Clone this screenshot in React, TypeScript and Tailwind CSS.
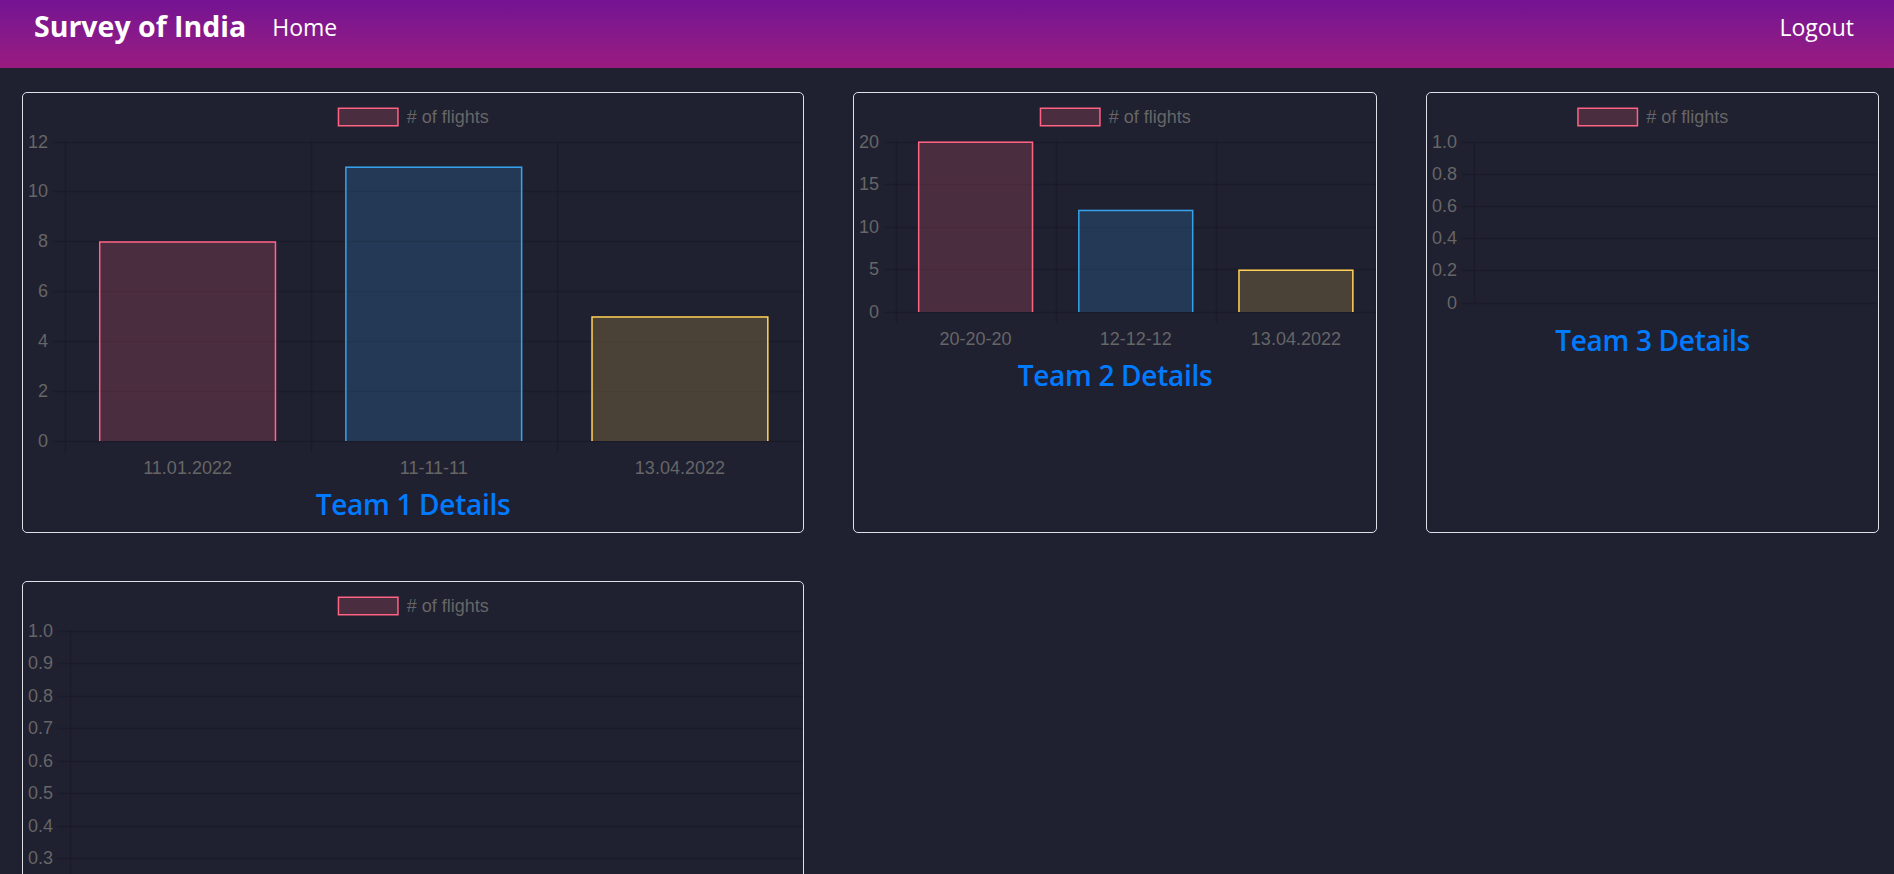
import React from "react";

type ChartProps = {
  w: number;
  yLabels: string[];
  max: number;
  values: number[];
  labels: string[];
  labelRight: number;
};

const FILLS = ["rgba(255,99,132,0.2)", "rgba(54,162,235,0.2)", "rgba(255,206,86,0.2)"];
const STROKES = ["rgb(255,99,132)", "rgb(54,162,235)", "rgb(255,206,86)"];
const GRID = "rgba(0,0,0,0.13)";
const FONT = "'Liberation Sans', Arial, sans-serif";

function BarChart({ w, yLabels, max, values, labels, labelRight }: ChartProps) {
  const h = w / 2;
  const plotTop = 48.5;
  const plotBottom = labels.length ? h - 42 : h - 16;
  const plotLeft = labelRight + 16.5;
  const plotRight = w;
  const n = labels.length;
  const cat = n ? (plotRight - plotLeft) / n : 0;
  const barW = cat * 0.72;
  const steps = yLabels.length - 1;
  const legendX = w / 2 - 75.3;

  return (
    <svg width={w} height={h} className="block" style={{ fontFamily: FONT }}>
      {/* legend */}
      <rect x={legendX + 0.75} y={15.25} width={59.5} height={17.5} fill={FILLS[0]} stroke={STROKES[0]} strokeWidth={1.5} />
      <text x={legendX + 69} y={23.5} fontSize={18} fill="#666" dominantBaseline="central">
        # of flights
      </text>

      {/* horizontal grid + y labels */}
      {yLabels.map((l, i) => {
        const y = Math.round(plotTop + ((plotBottom - plotTop) * i) / steps) + 0.5;
        return (
          <g key={l + i}>
            <line x1={plotLeft - 12} x2={plotRight} y1={y} y2={y} stroke={GRID} strokeWidth={1.5} />
            <text x={labelRight} y={y - 0.5} fontSize={18} fill="#666" textAnchor="end" dominantBaseline="central">
              {l}
            </text>
          </g>
        );
      })}

      {/* vertical grid */}
      {n ? (
        Array.from({ length: n + 1 }).map((_, i) => {
          const x = Math.round(plotLeft + i * cat) + 0.5;
          return <line key={i} x1={x} x2={x} y1={plotTop} y2={plotBottom + 12} stroke={GRID} strokeWidth={1.5} />;
        })
      ) : (
        <line x1={Math.round(plotLeft) + 0.5} x2={Math.round(plotLeft) + 0.5} y1={plotTop} y2={plotBottom} stroke={GRID} strokeWidth={1.5} />
      )}

      {/* bars */}
      {values.map((v, i) => {
        const x = plotLeft + i * cat + (cat - barW) / 2;
        const y = plotBottom - (v / max) * (plotBottom - plotTop);
        const x1 = x + 0.75;
        const x2 = x + barW - 0.75;
        const y1 = y + 0.75;
        return (
          <g key={i}>
            <rect x={x} y={y} width={barW} height={plotBottom - y} fill={FILLS[i % 3]} />
            <path
              d={`M${x1} ${plotBottom} L${x1} ${y1} L${x2} ${y1} L${x2} ${plotBottom}`}
              fill="none"
              stroke={STROKES[i % 3]}
              strokeWidth={1.5}
            />
          </g>
        );
      })}

      {/* x labels */}
      {labels.map((l, i) => (
        <text
          key={l}
          x={plotLeft + i * cat + cat / 2}
          y={plotBottom + 26.5}
          fontSize={18}
          fill="#666"
          textAnchor="middle"
          dominantBaseline="central"
        >
          {l}
        </text>
      ))}
    </svg>
  );
}

type Team = {
  name: string;
  width: string;
  inner: number;
  chart: Omit<ChartProps, "w">;
};

const teams: Team[] = [
  {
    name: "Team 1 Details",
    width: "w-[782px]",
    inner: 780,
    chart: {
      yLabels: ["12", "10", "8", "6", "4", "2", "0"],
      max: 12,
      values: [8, 11, 5],
      labels: ["11.01.2022", "11-11-11", "13.04.2022"],
      labelRight: 25,
    },
  },
  {
    name: "Team 2 Details",
    width: "w-[524px]",
    inner: 522,
    chart: {
      yLabels: ["20", "15", "10", "5", "0"],
      max: 20,
      values: [20, 12, 5],
      labels: ["20-20-20", "12-12-12", "13.04.2022"],
      labelRight: 25,
    },
  },
  {
    name: "Team 3 Details",
    width: "w-[453px]",
    inner: 451,
    chart: {
      yLabels: ["1.0", "0.8", "0.6", "0.4", "0.2", "0"],
      max: 1,
      values: [],
      labels: [],
      labelRight: 30,
    },
  },
  {
    name: "Team 4 Details",
    width: "w-[782px]",
    inner: 780,
    chart: {
      yLabels: ["1.0", "0.9", "0.8", "0.7", "0.6", "0.5", "0.4", "0.3", "0.2", "0.1", "0"],
      max: 1,
      values: [],
      labels: [],
      labelRight: 30,
    },
  },
];

export default function App() {
  return (
    <div className="min-h-screen bg-[#1f2030] font-['Open_Sans',sans-serif]">
      <nav className="flex h-[68px] items-start bg-linear-to-b from-[#741293] to-[#9a1a80] pl-[34px] pr-[40px] text-white">
        <a className="mt-[12px] text-[28.5px] font-bold leading-none">Survey of India</a>
        <a className="ml-[26px] mt-[16px] text-[23px] leading-none">Home</a>
        <a className="ml-auto mt-[16px] text-[23px] leading-none">Logout</a>
      </nav>
      <main className="flex flex-wrap gap-x-[49px] gap-y-12 pl-[22px] pt-6">
        {teams.map((t) => (
          <div key={t.name} className={`${t.width} flex flex-col rounded-[5px] border border-[#dee2e6]`}>
            <BarChart w={t.inner} {...t.chart} />
            <h3 className="mb-[9px] mt-[2px] text-center text-[28px] font-semibold leading-[38px] tracking-[-0.3px] text-[#007bff]">
              {t.name}
            </h3>
          </div>
        ))}
      </main>
    </div>
  );
}
